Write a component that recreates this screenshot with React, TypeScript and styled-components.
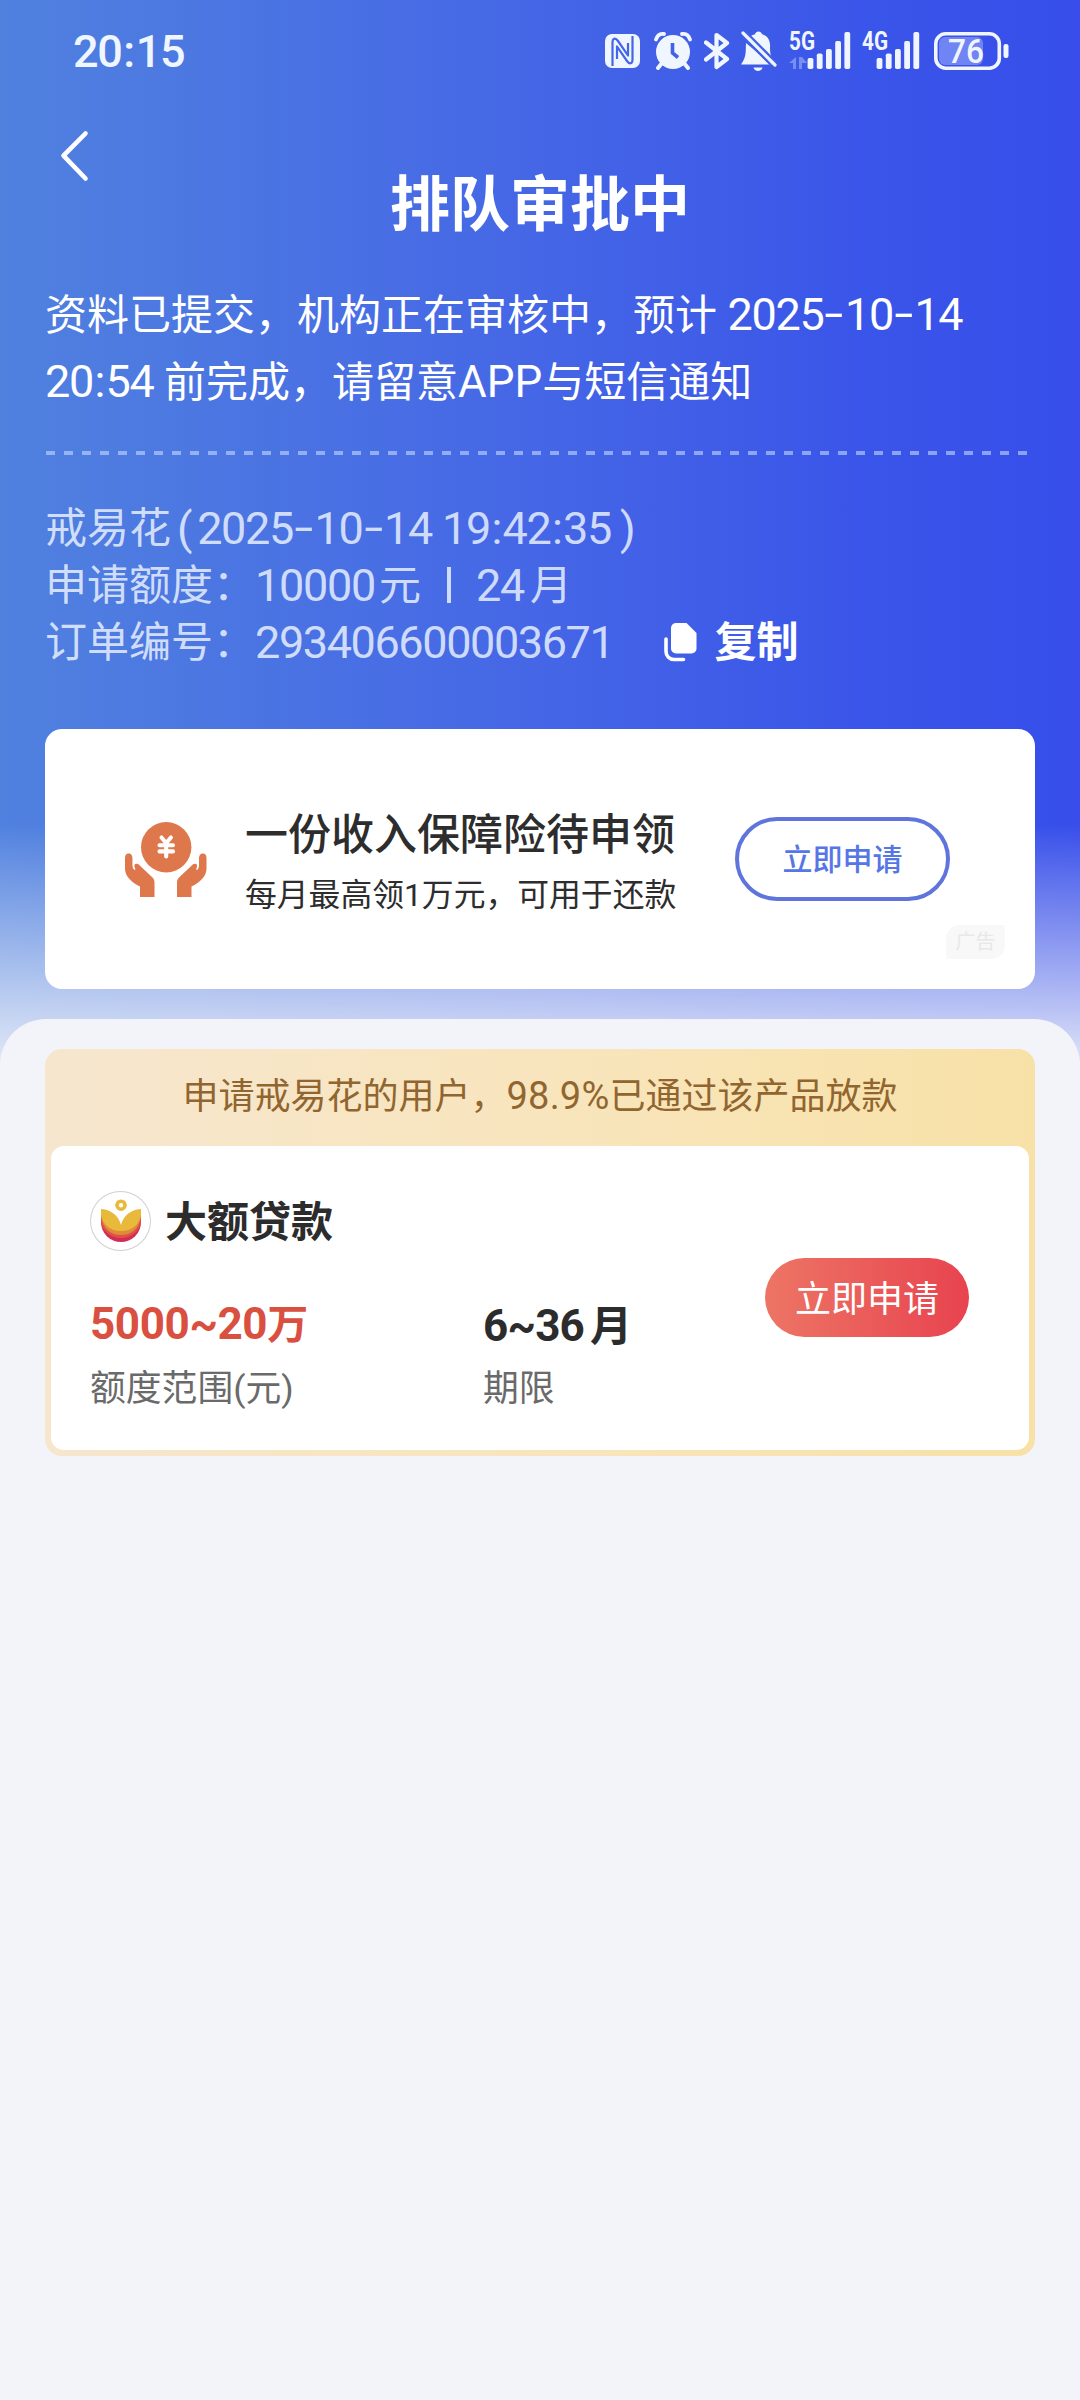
import React from "react";
import styled, { createGlobalStyle } from "styled-components";

const GlobalStyle = createGlobalStyle`
  * { box-sizing: border-box; }
  body {
    margin: 0;
    background: #f2f4f9;
    font-family: Roboto, "Noto Sans CJK SC", sans-serif;
  }
  button { font: inherit; border: 0; background: none; padding: 0; margin: 0; }
  svg { display: block; flex: none; }
`;

const Page = styled.div`
  width: 1080px;
  min-height: 2400px;
  background:
    linear-gradient(180deg, rgba(242, 244, 249, 0) 824px, #f2f4f9 1090px),
    linear-gradient(90deg, #5081df 0%, #4566e6 50%, #3a55e9 80%, #374eea 100%);
  color: #fff;
`;

const StatusBar = styled.header`
  height: 100px;
  padding: 0 70px 0 73px;
  display: flex;
  align-items: center;
  justify-content: space-between;
  color: #f0f6ff;
`;

const Clock = styled.time`
  font-size: 45px;
  font-weight: 500;
  line-height: 60px;
  letter-spacing: -1.4px;
  padding-top: 3px;
`;

const ClockColon = styled.span`
  padding: 0 2px;
`;

const StatusIcons = styled.div`
  display: flex;
  align-items: center;
  padding-top: 2px;
`;

const IconSlot = styled.div<{ $gap: number }>`
  margin-left: ${(p) => p.$gap}px;
`;

const Nav = styled.nav`
  height: 182px;
  padding: 0 45px;
  display: grid;
  grid-template-columns: 1fr auto 1fr;
`;

const BackButton = styled.button`
  justify-self: start;
  align-self: start;
  margin: 29px 0 0 14px;
`;

const Title = styled.h1`
  margin: 66px 0 0;
  height: 80px;
  font-size: 60px;
  line-height: 80px;
  font-weight: 700;
`;

const Notice = styled.p`
  margin: 0;
  padding: 0 45px;
  font-size: 42px;
  line-height: 66px;
  height: 132px;
  white-space: nowrap;
`;

const Divider = styled.div`
  height: 4px;
  margin: 37px 51px 0 46px;
  background: repeating-linear-gradient(90deg, rgba(200, 220, 255, 0.58) 0 9px, transparent 9px 18px);
`;

const Details = styled.div`
  padding: 45px 45px 0;
  height: 274px;
  font-size: 42px;
  color: rgba(232, 240, 255, 0.86);
`;

const DetailRow = styled.div`
  height: 57px;
  line-height: 57px;
  display: flex;
  white-space: pre;
`;

const Num = styled.span<{ $size?: number; $track?: number; $l?: number; $r?: number }>`
  font-size: ${(p) => p.$size ?? 45}px;
  letter-spacing: ${(p) => p.$track ?? -1.3}px;
  margin-left: ${(p) => p.$l ?? 0}px;
  margin-right: ${(p) => p.$r ?? 0}px;
`;

const Hyphen = styled.span`
  display: inline-block;
  width: 21.5px;
  text-align: center;
  line-height: 1;
  letter-spacing: 0;
  transform: translateY(-1px) scaleX(1.5);
`;

const Colon = styled.span`
  padding: 0 1.5px;
`;

const Digits = ({ text }: { text: string }) => (
  <>
    {text.split(/([-:])/).map((part, i) =>
      part === "-" ? <Hyphen key={i}>-</Hyphen> : part === ":" ? <Colon key={i}>:</Colon> : part,
    )}
  </>
);

const Bar = styled.span`
  width: 4px;
  height: 36px;
  margin: 10px 25px 0 26px;
  background: currentColor;
`;

const CopyButton = styled.button`
  margin-left: 51px;
  display: flex;
  align-items: center;
  gap: 16px;
  color: #fff;
  font-size: 42px;
  font-weight: 700;
  line-height: 57px;
`;

const AdCard = styled.section`
  margin: 0 45px;
  height: 260px;
  border-radius: 17px;
  background: #fff;
  color: #2d2d2d;
  padding: 0 26px 30px 80px;
  display: grid;
  grid-template-columns: 82px 528px 215px 1fr;
  grid-template-rows: 196px 34px;
`;

const AdIcon = styled.div`
  padding-top: 93px;
`;

const AdText = styled.div`
  padding: 75px 0 0 38px;
  white-space: nowrap;
`;

const AdTitle = styled.h2`
  margin: 0;
  font-size: 43px;
  line-height: 62px;
  font-weight: 500;
`;

const AdSub = styled.p`
  margin: 0;
  font-size: 31.8px;
  line-height: 58px;
`;

const OutlineButton = styled.button`
  width: 215px;
  height: 84px;
  margin-top: 88px;
  padding-bottom: 5px;
  border: 4px solid #5f74dc;
  border-radius: 42px;
  color: #5676e6;
  font-size: 30px;
  font-weight: 500;
`;

const AdTag = styled.span`
  grid-column: 4;
  grid-row: 2;
  width: 59px;
  height: 34px;
  margin-left: -4px;
  border-radius: 14px 3px 14px 3px;
  background: #f8f8f8;
  color: #e8e8e8;
  font-size: 20px;
  line-height: 34px;
  text-align: center;
`;

const Sheet = styled.main`
  margin-top: 30px;
  padding: 30px 45px 0;
  min-height: 1381px;
  border-radius: 46px 46px 0 0;
  background: #f2f4f9;
`;

const OfferFrame = styled.section`
  height: 407px;
  padding: 0 6px 6px;
  display: flex;
  flex-direction: column;
  border-radius: 17px;
  background: linear-gradient(90deg, #f6e6ce 0%, #f8e5bd 50%, #f8e1a7 100%);
`;

const OfferBanner = styled.div`
  height: 97px;
  line-height: 94px;
  text-align: center;
  font-size: 36px;
  color: #91652f;
  white-space: nowrap;
`;

const OfferBody = styled.div`
  flex: 1;
  border-radius: 13px;
  background: #fff;
  color: #2c2c2c;
  padding: 45px 60px 0 39px;
  display: flex;
  justify-content: space-between;
`;

const OfferInfo = styled.div`
  display: flex;
  flex-direction: column;
`;

const Brand = styled.div`
  height: 60px;
  display: flex;
  align-items: center;
  gap: 14px;
  font-size: 42px;
  line-height: 60px;
  font-weight: 700;
`;

const BrandName = styled.span`
  padding-top: 3px;
`;

const Logo = styled.div`
  width: 61px;
  height: 60px;
  border: 1px solid #d0cfd4;
  border-radius: 50%;
  display: grid;
  place-items: center;
`;

const Stats = styled.dl`
  margin: 39px 0 0;
  display: grid;
  grid-template-columns: 393px auto;
`;

const Stat = styled.div`
  display: flex;
  flex-direction: column-reverse;
  white-space: nowrap;
`;

const StatLabel = styled.dt`
  padding-top: 3px;
  font-size: 35.8px;
  line-height: 60px;
  color: #6a6a6a;
`;

const StatValue = styled.dd<{ $accent?: boolean }>`
  margin: 0;
  height: 66px;
  padding-top: ${(p) => (p.$accent ? 1 : 3)}px;
  font-size: ${(p) => (p.$accent ? 41 : 42)}px;
  line-height: 66px;
  font-weight: 700;
  color: ${(p) => (p.$accent ? "#d95041" : "#2c2c2c")};
`;

const SolidButton = styled.button`
  width: 204px;
  height: 79px;
  margin-top: 67px;
  padding-bottom: 3px;
  border-radius: 40px;
  background: linear-gradient(90deg, #ed7565, #e8434f);
  color: #fff;
  font-size: 36px;
`;

const NfcIcon = () => (
  <svg width="35" height="36" viewBox="0 0 35 36">
    <rect x="0" y="1" width="35" height="34" rx="7" fill="currentColor" />
    <path
      d="M7.500 33V9.500c0-4.500 3-5 5.500-1.500L23 22.500V10M27.500 3v23.500c0 4.500-3 5-5.500 1.500L12 13.500V26"
      fill="none"
      stroke="#4465e6"
      strokeWidth="2.200"
      strokeLinejoin="round"
    />
  </svg>
);

const AlarmIcon = () => (
  <svg width="38" height="38" viewBox="0 0 38 38">
    <circle cx="19" cy="20" r="17" fill="currentColor" />
    <path d="M2 7.500C3.500 3 6.500 1.500 10 2M36 7.500C34.500 3 31.500 1.500 28 2" stroke="currentColor" strokeWidth="3.800" fill="none" strokeLinecap="round" />
    <path d="M8 31l-4 5M30 31l4 5" stroke="currentColor" strokeWidth="4" strokeLinecap="round" />
    <path d="M18.500 11v10l5.500 4.500" stroke="#4262e6" strokeWidth="3.600" fill="none" />
  </svg>
);

const BluetoothIcon = () => (
  <svg width="26" height="38" viewBox="0 0 26 38">
    <path d="M2 10.500L23 27 12.500 35V3L23 11 2 27.500" fill="none" stroke="currentColor" strokeWidth="4.200" strokeLinecap="round" strokeLinejoin="round" />
  </svg>
);

const MutedIcon = () => (
  <svg width="37" height="40" viewBox="0 0 37 40">
    <path d="M5 12C4.500 20 6 25 0 33.500h31z" fill="currentColor" />
    <path d="M8.500 6.500C10 4.500 12 3.700 14 3.200c1-3.600 6-3.600 7 0C28 5 29.500 11 29 17c0 4 .5 7 2 10z" fill="currentColor" />
    <path d="M12.500 36.500h9c-.8 4.600-8.200 4.600-9 0z" fill="currentColor" />
    <path d="M5.500 1.500L35 31M2 6l28 28" stroke="#4060e6" strokeWidth="2.200" />
    <path d="M2 2l32 32" stroke="currentColor" strokeWidth="3.200" strokeLinecap="round" />
  </svg>
);

const SignalIcon = ({ label, data }: { label: string; data?: boolean }) => (
  <svg width={data ? 62 : 58} height="60" viewBox={data ? "0 -10 62 60" : "4 -10 58 60"}>
    <text x={data ? 0 : 4} y="19" fontFamily="Roboto, sans-serif" fontSize="25" fontWeight="700" textLength="26" lengthAdjust="spacingAndGlyphs" fill="currentColor">
      {label}
    </text>
    {data && <path d="M7 26v12H4v-6H0zM10 26h3l5 6h-5v6h-3z" fill="#8ba1f3" opacity=".75" />}
    {[11, 15.5, 20, 28, 37].map((h, i) => (
      <rect key={h} x={18.600 + i * 9.200} y={38 - h} width="5.800" height={h} rx="1.800" fill="currentColor" />
    ))}
  </svg>
);

const Battery = () => (
  <svg width="76" height="58" viewBox="0 -10 76 58">
    <rect x="5" y="5" width="44" height="28" rx="6" fill="#7084f3" />
    <rect x="1.800" y="1.800" width="63.500" height="34.400" rx="10" fill="none" stroke="currentColor" strokeWidth="3.600" />
    <rect x="69.500" y="12" width="5" height="14" rx="2.200" fill="currentColor" />
    <text x="32" y="31" textAnchor="middle" fontFamily="Roboto, sans-serif" fontSize="34" fontWeight="500" textLength="36" lengthAdjust="spacingAndGlyphs" fill="currentColor">
      76
    </text>
  </svg>
);

const BackIcon = () => (
  <svg width="32" height="54" viewBox="0 0 32 54">
    <path d="M26.500 4.500L4.500 26.700l22 22.800" fill="none" stroke="#fff" strokeWidth="4.600" strokeLinecap="round" strokeLinejoin="round" />
  </svg>
);

const CopyIcon = () => (
  <svg width="34" height="39" viewBox="0 0 34 39">
    <path d="M12 0h10.500l10 10v15.500a5 5 0 0 1-5 5H12a5 5 0 0 1-5-5V5a5 5 0 0 1 5-5z" fill="#fff" />
    <path d="M2 16v12.500a8 8 0 0 0 8 8h9.500" fill="none" stroke="#fff" strokeWidth="3.600" strokeLinecap="round" />
  </svg>
);

const HAND =
  "M0 36.500C0 33 1 31.500 3.800 31.500S7.500 34 7.500 37c0 4-.5 8 1 10 1.200 1.500 2.300.8 1.500-.8-1.200-2.800-.6-4.200 1-4.400 2.200-.2 3.200 1 4.500 2.400L27.500 55.500c1.500 1.700 2 3 2 5.500v14H15V64.500C7 61 0 54 0 47z";

const HandsIcon = () => (
  <svg width="82" height="75" viewBox="0 0 82 75">
    <circle cx="41.200" cy="25.200" r="25.200" fill="#de774b" />
    <path d="M36.500 15.500l4.700 5.500 4.700-5.500M41.200 21v13.500M34.500 23.200h13.500M34.500 29.400h13.500" fill="none" stroke="#fff" strokeWidth="4.100" strokeLinecap="round" />
    <path d={HAND} fill="#de774b" />
    <path d={HAND} transform="translate(81.500 0) scale(-1 1)" fill="#de774b" />
  </svg>
);

const LotusIcon = () => (
  <svg width="42" height="44" viewBox="0 0 42 44">
    <path d="M1 10v13a20 20 0 0 0 40 0V10z" fill="#d42b55" />
    <path d="M1 10v11a20 18 0 0 0 40 0V10z" fill="#df5148" />
    <path d="M1 10v8c2 12 10 18 20 18s18-6 20-18v-8z" fill="#e18a3a" />
    <path d="M1 10v6C3 26 10 32 21 32S39 26 41 16v-6z" fill="#e9b93c" />
    <path d="M0 9v1C10 10 18.500 16 21 26 23.500 16 32 10 42 10V9z" fill="#fff" />
    <circle cx="21" cy="6.200" r="4" fill="#fff" stroke="#e9b93c" strokeWidth="3.600" />
  </svg>
);

export default function App() {
  return (
    <Page lang="zh-CN">
      <GlobalStyle />
      <StatusBar>
        <Clock>
          20<ClockColon>:</ClockColon>15
        </Clock>
        <StatusIcons>
          <IconSlot $gap={0}><NfcIcon /></IconSlot>
          <IconSlot $gap={14}><AlarmIcon /></IconSlot>
          <IconSlot $gap={12}><BluetoothIcon /></IconSlot>
          <IconSlot $gap={11}><MutedIcon /></IconSlot>
          <IconSlot $gap={11}><SignalIcon label="5G" data /></IconSlot>
          <IconSlot $gap={11}><SignalIcon label="4G" /></IconSlot>
          <IconSlot $gap={14}><Battery /></IconSlot>
        </StatusIcons>
      </StatusBar>

      <Nav>
        <BackButton aria-label="返回"><BackIcon /></BackButton>
        <Title>排队审批中</Title>
      </Nav>

      <Notice>
        资料已提交，机构正在审核中，预计 <Num><Digits text="2025-10-14" /></Num>
        <br />
        <Num><Digits text="20:54" /></Num> 前完成，请留意<Num $size={44} $track={0}>APP</Num>与短信通知
      </Notice>
      <Divider />
      <Details>
        <DetailRow>
          戒易花<Num $l={6} $r={6}>(</Num><Num><Digits text="2025-10-14 19:42:35" /></Num><Num $l={9}>)</Num>
        </DetailRow>
        <DetailRow>
          申请额度：<Num $r={4} $track={-1.3}>10000</Num>元<Bar /><Num $r={6}>24</Num>月
        </DetailRow>
        <DetailRow>
          订单编号：<Num $track={-1.4}>293406600003671</Num>
          <CopyButton><CopyIcon />复制</CopyButton>
        </DetailRow>
      </Details>

      <AdCard>
        <AdIcon><HandsIcon /></AdIcon>
        <AdText>
          <AdTitle>一份收入保障险待申领</AdTitle>
          <AdSub>每月最高领1万元，可用于还款</AdSub>
        </AdText>
        <OutlineButton>立即申请</OutlineButton>
        <AdTag>广告</AdTag>
      </AdCard>

      <Sheet>
        <OfferFrame>
          <OfferBanner>
            申请戒易花的用户，<Num $size={38} $track={0.2}>98.9%</Num>已通过该产品放款
          </OfferBanner>
          <OfferBody>
            <OfferInfo>
              <Brand>
                <Logo><LotusIcon /></Logo>
                <BrandName>大额贷款</BrandName>
              </Brand>
              <Stats>
                <Stat>
                  <StatLabel>额度范围(元)</StatLabel>
                  <StatValue $accent><Num $size={44} $track={-0.4}>5000~20</Num>万</StatValue>
                </Stat>
                <Stat>
                  <StatLabel>期限</StatLabel>
                  <StatValue><Num $size={44} $track={-0.8} $r={6}>6~36</Num>月</StatValue>
                </Stat>
              </Stats>
            </OfferInfo>
            <SolidButton>立即申请</SolidButton>
          </OfferBody>
        </OfferFrame>
      </Sheet>
    </Page>
  );
}
